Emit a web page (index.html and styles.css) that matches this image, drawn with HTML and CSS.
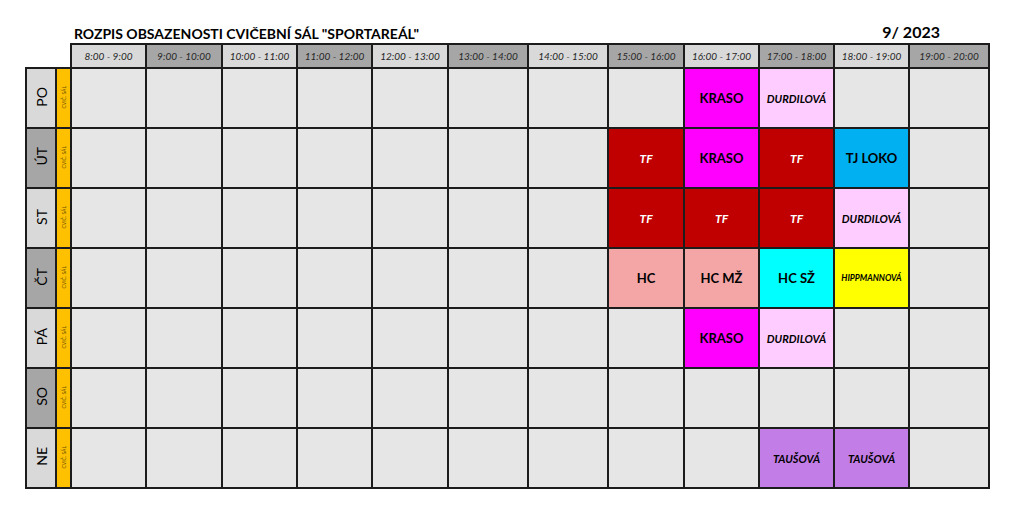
FILE: index.html
```html
<!DOCTYPE html>
<html lang="cs">
<head>
<meta charset="utf-8">
<title>Rozpis obsazenosti</title>
<link rel="stylesheet" href="styles.css">
</head>
<body>
<div class="page">
  <div class="titlebar">
    <h1 class="title">ROZPIS OBSAZENOSTI CVIČEBNÍ SÁL "SPORTAREÁL"</h1>
    <div class="date">9/ 2023</div>
  </div>
  <table class="sched">
    <colgroup>
      <col class="w30"><col class="w15">
      <col class="w75"><col class="w76"><col class="w75"><col class="w75"><col class="w76">
      <col class="w80"><col class="w80"><col class="w76"><col class="w75"><col class="w75"><col class="w75"><col class="w80">
    </colgroup>
    <thead>
      <tr class="hrow">
        <th class="corner"></th><th class="corner"></th>
        <th class="hl">8:00 - 9:00</th>
        <th class="hd">9:00 - 10:00</th>
        <th class="hl">10:00 - 11:00</th>
        <th class="hd">11:00 - 12:00</th>
        <th class="hl">12:00 - 13:00</th>
        <th class="hd">13:00 - 14:00</th>
        <th class="hl">14:00 - 15:00</th>
        <th class="hd">15:00 - 16:00</th>
        <th class="hl">16:00 - 17:00</th>
        <th class="hd">17:00 - 18:00</th>
        <th class="hl">18:00 - 19:00</th>
        <th class="hd">19:00 - 20:00</th>
      </tr>
    </thead>
    <tbody>
      <tr>
        <td class="day dl"><span class="rot">PO</span></td>
        <td class="hall"><span class="rot">CVIČ. SÁL</span></td>
        <td></td><td></td><td></td><td></td><td></td><td></td><td></td><td></td>
        <td class="magenta b">KRASO</td>
        <td class="pink bi">DURDILOVÁ</td>
        <td></td><td></td>
      </tr>
      <tr>
        <td class="day dd"><span class="rot">ÚT</span></td>
        <td class="hall"><span class="rot">CVIČ. SÁL</span></td>
        <td></td><td></td><td></td><td></td><td></td><td></td><td></td>
        <td class="red bi">TF</td>
        <td class="magenta b">KRASO</td>
        <td class="red bi">TF</td>
        <td class="blue b">TJ LOKO</td>
        <td></td>
      </tr>
      <tr>
        <td class="day dl"><span class="rot">ST</span></td>
        <td class="hall"><span class="rot">CVIČ. SÁL</span></td>
        <td></td><td></td><td></td><td></td><td></td><td></td><td></td>
        <td class="red bi">TF</td>
        <td class="red bi">TF</td>
        <td class="red bi">TF</td>
        <td class="pink bi">DURDILOVÁ</td>
        <td></td>
      </tr>
      <tr>
        <td class="day dd"><span class="rot">ČT</span></td>
        <td class="hall"><span class="rot">CVIČ. SÁL</span></td>
        <td></td><td></td><td></td><td></td><td></td><td></td><td></td>
        <td class="salmon b">HC</td>
        <td class="salmon b">HC MŽ</td>
        <td class="cyan b">HC SŽ</td>
        <td class="yellow bi small">HIPPMANNOVÁ</td>
        <td></td>
      </tr>
      <tr>
        <td class="day dl"><span class="rot">PÁ</span></td>
        <td class="hall"><span class="rot">CVIČ. SÁL</span></td>
        <td></td><td></td><td></td><td></td><td></td><td></td><td></td><td></td>
        <td class="magenta b">KRASO</td>
        <td class="pink bi">DURDILOVÁ</td>
        <td></td><td></td>
      </tr>
      <tr>
        <td class="day dd"><span class="rot">SO</span></td>
        <td class="hall"><span class="rot">CVIČ. SÁL</span></td>
        <td></td><td></td><td></td><td></td><td></td><td></td><td></td><td></td><td></td><td></td><td></td><td></td>
      </tr>
      <tr>
        <td class="day dl"><span class="rot">NE</span></td>
        <td class="hall"><span class="rot">CVIČ. SÁL</span></td>
        <td></td><td></td><td></td><td></td><td></td><td></td><td></td><td></td><td></td>
        <td class="purple bi">TAUŠOVÁ</td>
        <td class="purple bi">TAUŠOVÁ</td>
        <td></td>
      </tr>
    </tbody>
  </table>
</div>
</body>
</html>
```
FILE: styles.css
```css
html, body {
  margin: 0;
  padding: 0;
  background: #ffffff;
}
body {
  font-family: Lato, "Liberation Sans", sans-serif;
  color: #000;
}
.page {
  padding: 20px 0 0 25px;
  width: 964px;
}
.titlebar {
  display: flex;
  align-items: flex-end;
  justify-content: space-between;
  height: 23px;
  padding: 0 49px 0 49px;
}
.title {
  margin: 0;
  font-size: 14px;
  font-weight: 700;
  line-height: 18px;
  letter-spacing: 0;
}
.date {
  font-size: 16px;
  font-weight: 700;
  line-height: 20px;
  margin-bottom: 1px;
}
.sched {
  border-collapse: collapse;
  table-layout: fixed;
  width: 963px;
}
.w30 { width: 30px; }
.w15 { width: 15px; }
.w75 { width: 75px; }
.w76 { width: 76px; }
.w80 { width: 80px; }
.sched th, .sched td {
  border: 2px solid #1c1c1c;
  padding: 0;
  text-align: center;
  vertical-align: middle;
  background: #e6e6e6;
}
.sched th.corner {
  border: none;
  background: transparent;
}
.hrow {
  height: 24px;
}
.hrow th {
  font-weight: 400;
  font-style: italic;
  font-size: 10px;
  color: #262626;
  white-space: nowrap;
}
.sched th.hl { background: #d9d9d9; }
.sched th.hd { background: #a6a6a6; }
.sched tbody tr {
  height: 60px;
}
.sched td.day { font-size: 14px; }
.sched td.dl { background: #d9d9d9; }
.sched td.dd { background: #a6a6a6; }
.sched td.hall {
  background: #ffc000;
  font-size: 5px;
  color: #6b5200;
}
.rot {
  display: inline-block;
  writing-mode: vertical-rl;
  transform: rotate(180deg);
  white-space: nowrap;
}
.b {
  font-weight: 700;
  font-size: 13px;
}
.bi {
  font-weight: 700;
  font-style: italic;
  font-size: 11px;
}
.small {
  font-size: 8.5px;
}
.sched td.magenta { background: #ff00ff; }
.sched td.pink { background: #ffccff; }
.sched td.red { background: #c00000; color: #fff; font-size: 12px; }
.sched td.blue { background: #00b0f0; }
.sched td.salmon { background: #f4a6a6; }
.sched td.cyan { background: #00ffff; }
.sched td.yellow { background: #ffff00; }
.sched td.purple { background: #c27ee6; }
```
